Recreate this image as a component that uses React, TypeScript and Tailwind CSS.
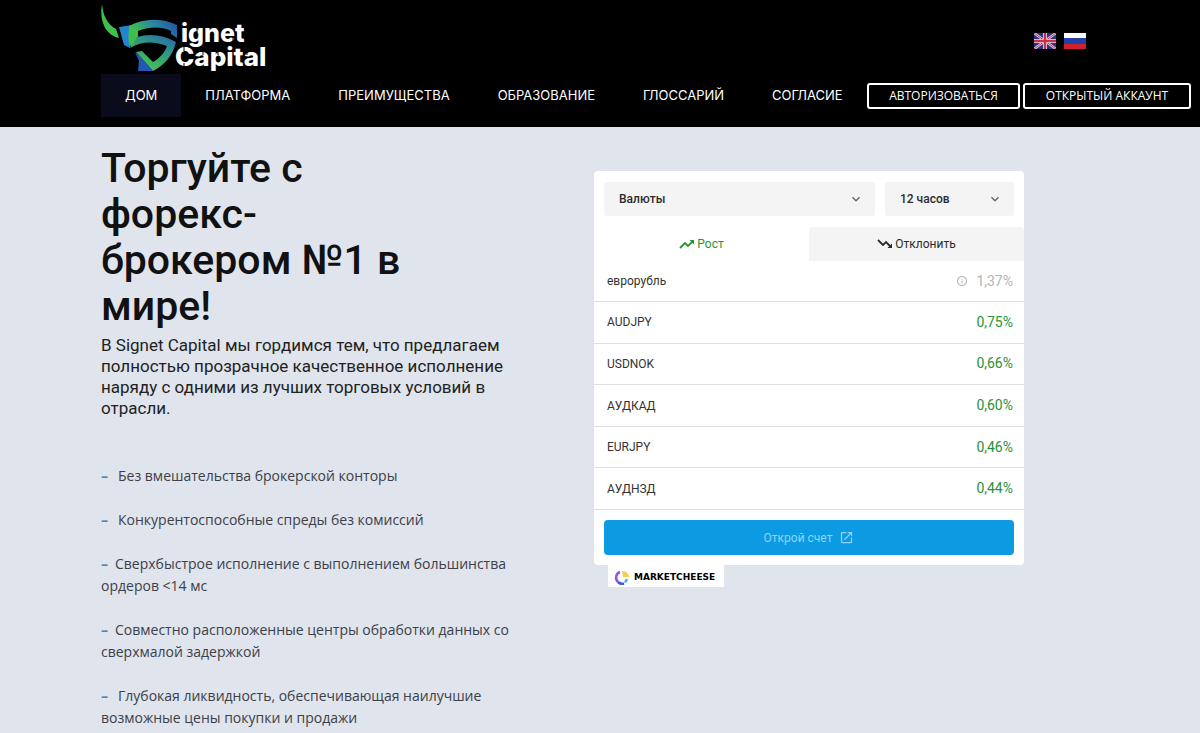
import React from 'react';
import { MdOpenInNew, MdInfoOutline, MdKeyboardArrowDown } from 'react-icons/md';

const navItems = ['ДОМ', 'ПЛАТФОРМА', 'ПРЕИМУЩЕСТВА', 'ОБРАЗОВАНИЕ', 'ГЛОССАРИЙ', 'СОГЛАСИЕ'];

const rates = [
  { name: 'еврорубль', value: '1,37%', closed: true },
  { name: 'AUDJPY', value: '0,75%' },
  { name: 'USDNOK', value: '0,66%' },
  { name: 'АУДКАД', value: '0,60%' },
  { name: 'EURJPY', value: '0,46%' },
  { name: 'АУДНЗД', value: '0,44%' },
];

const features = [
  { text: 'Без вмешательства брокерской конторы', wide: true },
  { text: 'Конкурентоспособные спреды без комиссий', wide: true },
  { text: 'Сверхбыстрое исполнение с выполнением большинства ордеров <14 мс' },
  { text: 'Совместно расположенные центры обработки данных со сверхмалой задержкой' },
  { text: 'Глубокая ликвидность, обеспечивающая наилучшие возможные цены покупки и продажи', wide: true },
];

function Logo() {
  return (
    <svg width="172" height="70" viewBox="0 0 172 70" role="img" aria-label="Signet Capital">
      <defs>
        <linearGradient id="shieldTop" x1="0" y1="0.4" x2="1" y2="0">
          <stop offset="0.1" stopColor="#3fbf4a" />
          <stop offset="0.5" stopColor="#2b8aa0" />
          <stop offset="1" stopColor="#2450a4" />
        </linearGradient>
        <linearGradient id="shieldBottom" x1="0.3" y1="1" x2="0.9" y2="0">
          <stop offset="0" stopColor="#4cc94a" />
          <stop offset="0.5" stopColor="#33a078" />
          <stop offset="1" stopColor="#2467ae" />
        </linearGradient>
      </defs>
      <path d="M2 0C-1 16 5 31 19 34L16 25C8 21 3 12 2 0Z" fill="#3fc04c" />
      <path d="M19 23L32 21L30 44L24 41Z" fill="#2385cc" />
      <path d="M29 22C44 14 62 14 77 21V34L71 30V27C60 22 48 23 38 27V33L31 43C27 36 29 29 29 22Z" fill="url(#shieldTop)" />
      <path d="M30 44L37 33C50 29 64 31 76 38C73 51 65 61 53 67L36 48L42 47L53 58C60 54 65 48 67 42C54 37 42 37 30 44Z" fill="url(#shieldBottom)" />
      <path d="M35 48L40 52L53 67H38L39 57Z" fill="#2458b4" />
      <g fill="#fff" fontFamily="Inter, sans-serif" fontWeight="800">
        <text x="81" y="38" fontSize="25">ignet</text>
        <text x="75" y="62" fontSize="26">Capital</text>
      </g>
      {/* stencil cuts of the lettering */}
      <path d="M97 24V28M133 34V39M84 42V47M84 59V63M103 47V51M118 47V51M147 47V51" stroke="#000" strokeWidth="1" />
    </svg>
  );
}

function FlagUk() {
  return (
    <svg width="22" height="16" viewBox="0 0 22 16" aria-hidden="true">
      <rect width="22" height="16" fill="#2b3480" />
      <path d="M0 0L22 16M22 0L0 16" stroke="#d8d2e4" strokeWidth="2.5" />
      <path d="M0 0L22 16M22 0L0 16" stroke="#c8304c" strokeWidth="1" />
      <path d="M11 0V16M0 8H22" stroke="#e6dfea" strokeWidth="4" />
      <path d="M11 0V16M0 8H22" stroke="#c8304c" strokeWidth="2.5" />
    </svg>
  );
}

function FlagRu() {
  return (
    <svg width="22" height="16" viewBox="0 0 22 16" aria-hidden="true">
      <rect width="22" height="6" fill="#fff" />
      <rect y="5" width="22" height="6" fill="#2240a8" />
      <rect y="11" width="22" height="5" fill="#d0202c" />
    </svg>
  );
}

function TrendUp() {
  return (
    <svg width="16" height="16" viewBox="0 0 16 16" fill="none" stroke="currentColor" strokeWidth="1.8" aria-hidden="true">
      <path d="M1 12L6 7L9 10L14 5" />
      <path d="M10.5 4H15V8.500Z" fill="currentColor" stroke="none" />
    </svg>
  );
}

function TrendDown() {
  return (
    <svg width="16" height="16" viewBox="0 0 16 16" fill="none" stroke="currentColor" strokeWidth="1.8" aria-hidden="true">
      <path d="M1 4L6 9L9 6L14 11" />
      <path d="M10.5 12H15V7.500Z" fill="currentColor" stroke="none" />
    </svg>
  );
}

function Header() {
  return (
    <header className="bg-black pt-1 pb-[10px] font-['Open_Sans',sans-serif] text-white">
      <div className="flex items-center justify-between pl-[100px] pr-[114px]">
        <a href="#"><Logo /></a>
        <div className="flex gap-2 pt-1">
          <a href="#en" aria-label="English"><FlagUk /></a>
          <a href="#ru" aria-label="Русский"><FlagRu /></a>
        </div>
      </div>
      <div className="flex items-center justify-between pl-[101px] pr-[9px]">
        <nav className="flex font-['Inter',sans-serif] text-[13px]">
          {navItems.map((item, i) => (
            <a key={item} href="#" className={`flex h-[43px] items-center px-6 ${i === 0 ? 'bg-[#0a0c1c]' : ''}`}>
              {item}
            </a>
          ))}
        </nav>
        <div className="flex gap-[3px] text-[12px]">
          <button className="h-[26px] w-[153px] rounded-[3px] border-2 border-white">АВТОРИЗОВАТЬСЯ</button>
          <button className="h-[26px] w-[168px] rounded-[3px] border-2 border-white">ОТКРЫТЫЙ АККАУНТ</button>
        </div>
      </div>
    </header>
  );
}

function Select({ label, option, className }: { label: string; option: string; className: string }) {
  return (
    <div className={`grid items-center ${className}`}>
      <select
        aria-label={label}
        className="col-start-1 row-start-1 h-[34px] appearance-none rounded-[3px] bg-[#f4f4f5] pl-[15px] text-[12px] font-medium text-[#2b2b2b]"
      >
        <option>{option}</option>
      </select>
      <MdKeyboardArrowDown size={16} className="pointer-events-none col-start-1 row-start-1 mr-[11px] justify-self-end text-[#666]" />
    </div>
  );
}

function RatesWidget() {
  return (
    <section className="font-['Roboto',sans-serif]">
      <div className="rounded bg-white pt-[11px] pb-[10px]">
        <div className="flex gap-[10px] px-[10px]">
          <Select label="Рынок" option="Валюты" className="flex-1" />
          <Select label="Период" option="12 часов" className="w-[129px]" />
        </div>
        <div className="mt-[11px] grid grid-cols-2 text-[12px]">
          <button className="flex h-[34px] items-center justify-center gap-[2px] text-[#2a9235]">
            <TrendUp /> Рост
          </button>
          <button className="flex h-[34px] items-center justify-center gap-[2px] rounded-t bg-[#f4f4f5] text-[#2b2b2b]">
            <TrendDown /> Отклонить
          </button>
        </div>
        <table className="h-[249px] w-full">
          <tbody>
            {rates.map((rate) => (
              <tr key={rate.name} className="border-b border-[#dfdfe1]">
                <td className="pl-[13px] text-[12px] text-[#333]">{rate.name}</td>
                <td className={`pr-[11px] text-[14px] ${rate.closed ? 'text-[#b4b4b4]' : 'text-[#2a9235]'}`}>
                  <span className="flex items-center justify-end gap-2">
                    {rate.closed && <MdInfoOutline size={12} />}
                    {rate.value}
                  </span>
                </td>
              </tr>
            ))}
          </tbody>
        </table>
        <div className="px-[10px] pt-[10px]">
          <button className="flex h-[35px] w-full items-center justify-center gap-[7px] rounded bg-[#0c9ae3] text-[12px] text-[#8fd3f7]">
            Открой счет <MdOpenInNew size={15} />
          </button>
        </div>
      </div>
      <a href="#" className="ml-[14px] flex h-[22px] w-[116px] items-center gap-1 bg-white pl-[6px] pt-1 font-['DejaVu_Sans',sans-serif] text-[9px] font-bold text-black">
        <svg width="16" height="16" viewBox="0 0 16 16" fill="none" aria-hidden="true">
          <path d="M6 2A6 6 0 0 0 4 12" stroke="#9157d8" strokeWidth="2.5" />
          <path d="M4 12A6 6 0 0 0 10 13.5" stroke="#3b5be0" strokeWidth="2.5" />
          <path d="M11 12.5L13 9" stroke="#45a8e8" strokeWidth="2.5" />
          <path d="M8 1C12 1 15 4 15 7L9 7Z" fill="#f6cf45" />
        </svg>
        MARKETCHEESE
      </a>
    </section>
  );
}

export default function App() {
  return (
    <div className="min-h-screen bg-[#e0e4ec]">
      <Header />
      <main className="grid grid-cols-[1fr_430px] gap-[72px] pl-[101px] pr-[176px]">
        <section className="pt-[18px]">
          <h1 className="max-w-[330px] font-['Roboto',sans-serif] text-[41px] leading-[46px] font-medium text-[#111]">
            Торгуйте с форекс-брокером №1 в мире!
          </h1>
          <p className="mt-[6px] font-['Roboto',sans-serif] text-[17px] leading-[21px] text-[#222]">
            В Signet Capital мы гордимся тем, что предлагаем полностью прозрачное качественное исполнение наряду с одними из лучших торговых условий в отрасли.
          </p>
          <ul className="mt-[46px] flex flex-col gap-[22px] font-['Open_Sans',sans-serif] text-[14px] leading-[22px] text-[#3c4048]">
            {features.map((feature) => (
              <li
                key={feature.text}
                className={`before:font-bold before:text-[#4a86c0] before:content-['–'] ${feature.wide ? 'before:mr-[10px]' : 'before:mr-[7px]'}`}
              >
                {feature.text}
              </li>
            ))}
          </ul>
        </section>
        <div className="pt-[44px]">
          <RatesWidget />
        </div>
      </main>
    </div>
  );
}
